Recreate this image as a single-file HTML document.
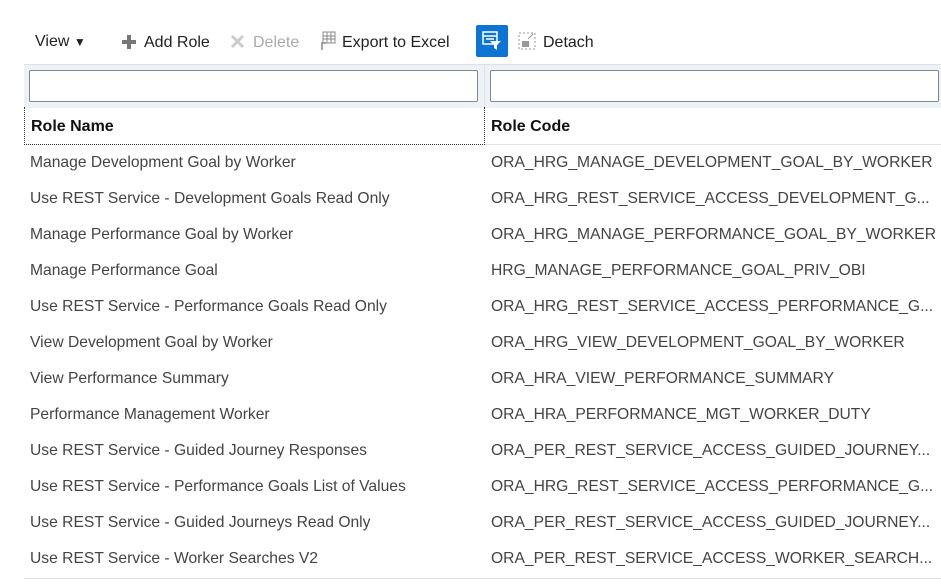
<!DOCTYPE html>
<html><head><style>
body{margin:0;width:941px;height:588px;background:#fff;font-family:"Liberation Sans",sans-serif;overflow:hidden;position:relative}
.t{position:absolute;font-size:16px;color:#222;white-space:nowrap}
.g{color:#aaa}
.row{position:absolute;font-size:15.65px;color:#444;white-space:nowrap}
</style></head><body>
<div class="t" style="left:35px;top:33px">View <span style="font-size:12px">&#9660;</span></div>
<svg style="position:absolute;left:121px;top:34px" width="16" height="16"><rect x="6" y="1" width="4" height="14" fill="#777"/><rect x="1" y="6" width="14" height="4" fill="#777"/></svg>
<div class="t" style="left:144px;top:34px">Add Role</div>
<svg style="position:absolute;left:230px;top:34px" width="15" height="15"><path d="M2 2L13 13M13 2L2 13" stroke="#ccc" stroke-width="3"/></svg>
<div class="t g" style="left:253px;top:34px">Delete</div>
<svg style="position:absolute;left:318px;top:31px" width="18" height="20"><rect x="5" y="1" width="12" height="11" fill="none" stroke="#888"/><path d="M5 5H17M5 8H17M9 1V12M13 1V12" stroke="#888"/><path d="M4 19V12H8" stroke="#888" stroke-width="1.5" fill="none"/></svg>
<div class="t" style="left:342px;top:34px">Export to Excel</div>
<div style="position:absolute;left:476px;top:25px;width:32px;height:32px;background:#0b74d4;border-radius:2px"></div>
<svg style="position:absolute;left:482px;top:31px" width="20" height="20"><rect x="1" y="1" width="14" height="12" fill="none" stroke="#fff" stroke-width="1.5"/><path d="M1 5H15M4 8H12" stroke="#fff" stroke-width="1.5"/><path d="M8 10H19L15 14V19L12 17V14Z" fill="#fff"/></svg>
<svg style="position:absolute;left:518px;top:32px" width="18" height="18"><rect x="1" y="1" width="16" height="16" fill="none" stroke="#999" stroke-dasharray="2 2"/><rect x="4" y="9" width="7" height="6" fill="#999"/><path d="M10 7L15 2" stroke="#999"/></svg>
<div class="t" style="left:543px;top:34px">Detach</div>
<div style="position:absolute;left:24px;top:64px;width:917px;height:43px;background:#eef1f5;border-top:1px solid #dde3ea"></div>
<div style="position:absolute;left:484px;top:64px;width:1px;height:43px;background:#dde3ea"></div>
<div style="position:absolute;left:29px;top:70px;width:447px;height:30px;border:1px solid #7d8a96;border-radius:2px;background:#fff"></div>
<div style="position:absolute;left:490px;top:70px;width:447px;height:30px;border:1px solid #7d8a96;border-radius:2px;background:#fff"></div>
<div style="position:absolute;left:24px;top:107px;width:459px;height:37px;border:1px dotted #333;border-top:none"></div>
<div style="position:absolute;left:485px;top:144px;width:456px;height:1px;background:#dde3ea"></div>
<div class="t" style="left:31px;top:118px;font-weight:bold;color:#111">Role Name</div>
<div class="t" style="left:491px;top:118px;font-weight:bold;color:#111">Role Code</div>
<div class="row" style="left:30px;top:155px;line-height:16px">
<div style="height:36px">Manage Development Goal by Worker</div>
<div style="height:36px">Use REST Service - Development Goals Read Only</div>
<div style="height:36px">Manage Performance Goal by Worker</div>
<div style="height:36px">Manage Performance Goal</div>
<div style="height:36px">Use REST Service - Performance Goals Read Only</div>
<div style="height:36px">View Development Goal by Worker</div>
<div style="height:36px">View Performance Summary</div>
<div style="height:36px">Performance Management Worker</div>
<div style="height:36px">Use REST Service - Guided Journey Responses</div>
<div style="height:36px">Use REST Service - Performance Goals List of Values</div>
<div style="height:36px">Use REST Service - Guided Journeys Read Only</div>
<div style="height:36px">Use REST Service - Worker Searches V2</div>
</div>
<div class="row" style="left:491px;top:155px;line-height:16px">
<div style="height:36px">ORA_HRG_MANAGE_DEVELOPMENT_GOAL_BY_WORKER</div>
<div style="height:36px">ORA_HRG_REST_SERVICE_ACCESS_DEVELOPMENT_G...</div>
<div style="height:36px">ORA_HRG_MANAGE_PERFORMANCE_GOAL_BY_WORKER</div>
<div style="height:36px">HRG_MANAGE_PERFORMANCE_GOAL_PRIV_OBI</div>
<div style="height:36px">ORA_HRG_REST_SERVICE_ACCESS_PERFORMANCE_G...</div>
<div style="height:36px">ORA_HRG_VIEW_DEVELOPMENT_GOAL_BY_WORKER</div>
<div style="height:36px">ORA_HRA_VIEW_PERFORMANCE_SUMMARY</div>
<div style="height:36px">ORA_HRA_PERFORMANCE_MGT_WORKER_DUTY</div>
<div style="height:36px">ORA_PER_REST_SERVICE_ACCESS_GUIDED_JOURNEY...</div>
<div style="height:36px">ORA_HRG_REST_SERVICE_ACCESS_PERFORMANCE_G...</div>
<div style="height:36px">ORA_PER_REST_SERVICE_ACCESS_GUIDED_JOURNEY...</div>
<div style="height:36px">ORA_PER_REST_SERVICE_ACCESS_WORKER_SEARCH...</div>
</div>
<div style="position:absolute;left:24px;top:578px;width:917px;height:1px;background:#dde3ea"></div>
</body></html>
